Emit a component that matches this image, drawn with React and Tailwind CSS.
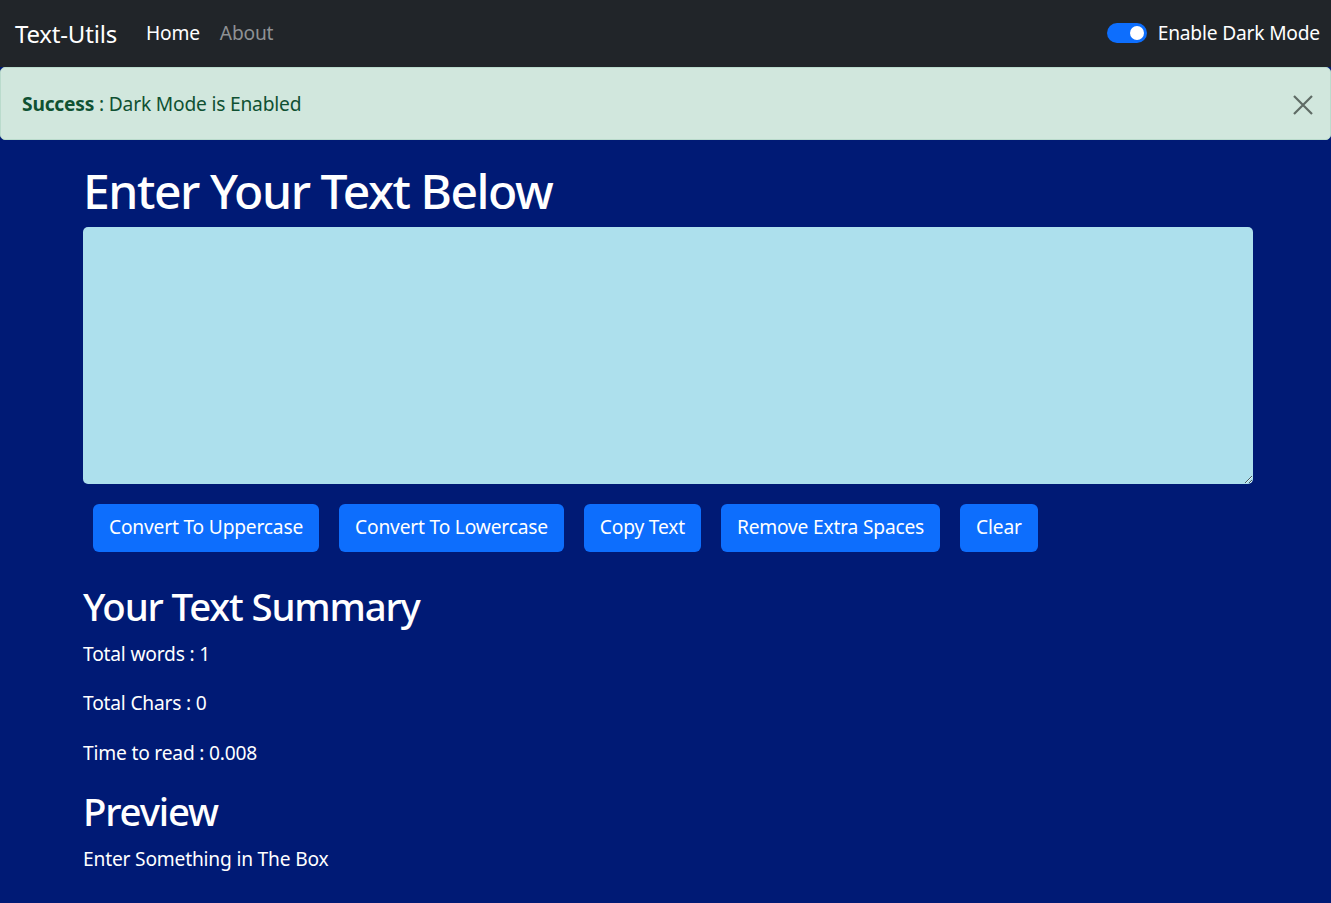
import React, { useState } from 'react'

const FONT = "font-['Segoe_UI','Noto_Sans',sans-serif] tracking-[-0.012em]"

function Navbar({ dark, onToggle }) {
    return (
        <nav className="flex items-center justify-between h-[67px] bg-[#212529] pl-[15px] pr-[11px]">
            <div className="flex items-center">
                <a className="text-[24px] text-white mr-[29px]">Text-Utils</a>
                <ul className="flex items-center gap-[20px] text-[19.2px]">
                    <li className="text-white">Home</li>
                    <li className="text-[#8e9194]">About</li>
                </ul>
            </div>
            <label className="flex items-center gap-[11px] text-[19.2px] text-white cursor-pointer" onClick={onToggle}>
                <span className={`flex items-center w-[40px] h-[20px] rounded-full px-[3px] ${dark ? 'bg-[#0d6efd] justify-end' : 'bg-white border border-gray-400 justify-start'}`}>
                    <span className={`w-[14px] h-[14px] rounded-full ${dark ? 'bg-white' : 'bg-gray-400'}`} />
                </span>
                Enable Dark Mode
            </label>
        </nav>
    )
}

function Alert({ onClose }) {
    return (
        <div className="flex items-center justify-between h-[73px] bg-[#d1e7dd] border border-[#badbcc] rounded-[5px] pl-[21px] pr-[16px] pt-[2px] text-[19.2px] text-[#0f5132]">
            <div>
                <strong className="font-bold">Success</strong> : Dark Mode is Enabled
            </div>
            <button className="w-[22px] h-[22px] flex items-center justify-center" onClick={onClose}>
                <svg width="22" height="22" viewBox="0 0 22 22" fill="none" stroke="#5f6b65" strokeWidth="2.2" strokeLinecap="butt">
                    <path d="M2 2L20 20M20 2L2 20" />
                </svg>
            </button>
        </div>
    )
}

export default function App() {
    const [text, setText] = useState('')
    const [dark, setDark] = useState(true)
    const [showAlert, setShowAlert] = useState(true)

    const words = text.split(' ').length
    const buttons = ['Convert To Uppercase', 'Convert To Lowercase', 'Copy Text', 'Remove Extra Spaces', 'Clear']

    return (
        <div className={`min-h-[903px] bg-[#001a75] ${FONT}`}>
            <Navbar dark={dark} onToggle={() => setDark(!dark)} />
            {showAlert && <Alert onClose={() => setShowAlert(false)} />}
            <div className="pl-[83px] pt-[22px] text-white">
                <h1 className="text-[48px] font-medium tracking-[-0.03em] leading-[1.2] mb-[7px]">Enter Your Text Below</h1>
                <textarea
                    className="block w-[1170px] h-[257px] bg-[#ade0ed] rounded-[5px] outline-none p-[8px] text-[19.2px] text-black"
                    value={text}
                    onChange={(e) => setText(e.target.value)}
                />
                <div className="flex gap-[20px] mt-[20px] ml-[10px]">
                    {buttons.map((b) => (
                        <button key={b} className="h-[48px] px-[16px] bg-[#0d6efd] rounded-[6px] text-[19.2px] text-white">
                            {b}
                        </button>
                    ))}
                </div>
                <h2 className="text-[38.4px] font-medium tracking-[-0.03em] leading-[1.2] mt-[31px] mb-[11px]">Your Text Summary</h2>
                <p className="text-[19.2px] leading-[1.5] mb-[21px]">Total words : {words}</p>
                <p className="text-[19.2px] leading-[1.5] mb-[21px]">Total Chars : {text.length}</p>
                <p className="text-[19.2px] leading-[1.5] mb-[20px]">Time to read : {0.008 * words}</p>
                <h2 className="text-[38.4px] font-medium tracking-[-0.03em] leading-[1.2] mb-[11px]">Preview</h2>
                <p className="text-[19.2px] leading-[1.5]">{text.length > 0 ? text : 'Enter Something in The Box'}</p>
            </div>
        </div>
    )
}
